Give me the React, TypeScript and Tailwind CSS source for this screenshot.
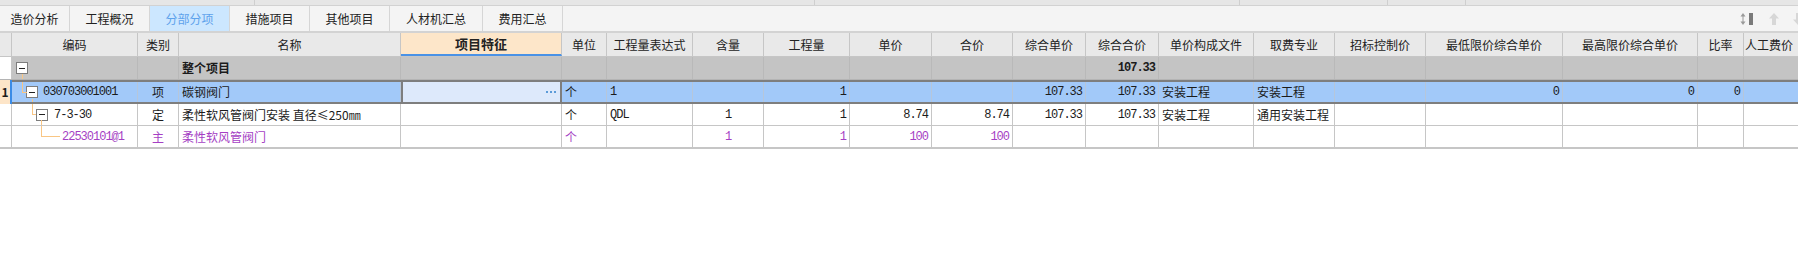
import React from 'react';
import clsx from 'clsx';

const cols = [
  { key: 'code', w: 'w-[126px]', title: '编码', align: 'l' },
  { key: 'type', w: 'w-[41px]', title: '类别', align: 'c' },
  { key: 'name', w: 'w-[222px]', title: '名称', align: 'l' },
  { key: 'feat', w: 'w-[161px]', title: '项目特征', align: 'l' },
  { key: 'unit', w: 'w-[45px]', title: '单位', align: 'l' },
  { key: 'expr', w: 'w-[86px]', title: '工程量表达式', align: 'l' },
  { key: 'content', w: 'w-[71px]', title: '含量', align: 'c' },
  { key: 'qty', w: 'w-[86px]', title: '工程量', align: 'r' },
  { key: 'price', w: 'w-[82px]', title: '单价', align: 'r' },
  { key: 'total', w: 'w-[81px]', title: '合价', align: 'r' },
  { key: 'cprice', w: 'w-[73px]', title: '综合单价', align: 'r' },
  { key: 'ctotal', w: 'w-[73px]', title: '综合合价', align: 'r' },
  { key: 'file', w: 'w-[95px]', title: '单价构成文件', align: 'l' },
  { key: 'major', w: 'w-[81px]', title: '取费专业', align: 'l' },
  { key: 'ctrl', w: 'w-[91px]', title: '招标控制价', align: 'r' },
  { key: 'min', w: 'w-[137px]', title: '最低限价综合单价', align: 'r' },
  { key: 'max', w: 'w-[135px]', title: '最高限价综合单价', align: 'r' },
  { key: 'rate', w: 'w-[46px]', title: '比率', align: 'r' },
  { key: 'labor', w: 'w-[100px]', title: '人工费价', align: 'r' },
];

const alignCls: Record<string, string> = {
  l: 'justify-start',
  c: 'justify-center',
  r: 'justify-end',
};

const tabs = ['造价分析', '工程概况', '分部分项', '措施项目', '其他项目', '人材机汇总', '费用汇总'];
const tabW = ['w-[70px]', 'w-[80px]', 'w-[80px]', 'w-[80px]', 'w-[80px]', 'w-[93px]', 'w-[80px]'];

const mono = "font-['Liberation_Mono','Noto_Sans_CJK_SC',monospace] tracking-[-1px]";

type RowData = Record<string, string>;

// tree box "−"
function Box() {
  return (
    <span className="shrink-0 w-[12px] h-[12px] border border-[#7d7d7d] bg-white flex items-center justify-center">
      <span className="w-[6px] h-[1px] bg-[#222]" />
    </span>
  );
}

function TreeCell({ level, text, className }: { level: number; text: string; className?: string }) {
  return (
    <div className={clsx('relative shrink-0 w-[126px] h-full border-r flex items-center', className)}>
      {level === 0 && (
        <>
          <span className="ml-[4px]"><Box /></span>
          <span className="absolute left-[10px] top-[17px] bottom-0 w-px bg-[#f9c684]" />
        </>
      )}
      {level === 1 && (
        <>
          <span className="absolute left-[10px] top-0 h-[11px] w-px bg-[#f9c684]" />
          <span className="absolute left-[10px] top-[10px] w-[5px] h-px bg-[#f9c684]" />
          <span className="absolute left-[20px] top-[17px] bottom-0 w-px bg-[#f9c684]" />
          <span className="ml-[14px]"><Box /></span>
          <span className={clsx('ml-[5px]', mono)}>{text}</span>
        </>
      )}
      {level === 2 && (
        <>
          <span className="absolute left-[20px] top-0 h-[11px] w-px bg-[#f9c684]" />
          <span className="absolute left-[20px] top-[10px] w-[4px] h-px bg-[#f9c684]" />
          <span className="absolute left-[29px] top-[16px] bottom-0 w-px bg-[#f9c684]" />
          <span className="ml-[24px]"><Box /></span>
          <span className={clsx('ml-[6px]', mono)}>{text}</span>
        </>
      )}
      {level === 3 && (
        <>
          <span className="absolute left-[29px] top-0 h-[11px] w-px bg-[#f9c684]" />
          <span className="absolute left-[29px] top-[10px] w-[19px] h-px bg-[#f9c684]" />
          <span className={clsx('ml-[50px]', mono)}>{text}</span>
        </>
      )}
    </div>
  );
}

function isLatin(s: string) {
  return /^[0-9A-Za-z.@\-]+$/.test(s);
}

function DataCells({ data, border, featCell }: { data: RowData; border: string; featCell?: React.ReactNode }) {
  return (
    <>
      {cols.slice(1).map((c) =>
        c.key === 'feat' && featCell ? (
          <React.Fragment key={c.key}>{featCell}</React.Fragment>
        ) : (
          <div
            key={c.key}
            className={clsx(
              'shrink-0 h-full flex items-center px-[3px] border-r overflow-hidden whitespace-nowrap',
              c.w,
              border,
              alignCls[c.align],
              data[c.key] && isLatin(data[c.key]) && mono
            )}
          >
            {data[c.key] || ''}
          </div>
        )
      )}
    </>
  );
}

export default function App() {
  const selRow: RowData = {
    type: '项',
    name: '碳钢阀门',
    unit: '个',
    expr: '1',
    qty: '1',
    cprice: '107.33',
    ctotal: '107.33',
    file: '安装工程',
    major: '安装工程',
    min: '0',
    max: '0',
    rate: '0',
  };
  const quotaRow: RowData = {
    type: '定',
    name: '柔性软风管阀门安装 直径≤250㎜',
    unit: '个',
    expr: 'QDL',
    content: '1',
    qty: '1',
    price: '8.74',
    total: '8.74',
    cprice: '107.33',
    ctotal: '107.33',
    file: '安装工程',
    major: '通用安装工程',
  };
  const mainRow: RowData = {
    type: '主',
    name: '柔性软风管阀门',
    unit: '个',
    content: '1',
    qty: '1',
    price: '100',
    total: '100',
  };

  return (
    <div className="w-[1798px] h-[280px] overflow-hidden bg-white text-[12px] leading-none text-[#1b1b1b] font-['Noto_Sans_CJK_SC','Liberation_Sans',sans-serif]">
      {/* top strip */}
      <div className="flex h-[6px] bg-[#e6e6e6] border-b border-[#d2d2d2]">
        <div className="w-[255px] border-r border-[#cfcfcf]" />
        <div className="w-[560px] border-r border-[#cfcfcf]" />
        <div className="w-[425px] border-r border-[#cfcfcf]" />
        <div className="w-[148px] border-r border-[#cfcfcf]" />
        <div className="w-[78px] border-r border-[#cfcfcf]" />
      </div>

      {/* tabs */}
      <div className="flex h-[27px] bg-[#f4f4f4] border-b-2 border-[#d3d3d3]">
        {tabs.map((t, i) => (
          <div
            key={t}
            className={clsx(
              'h-full flex items-center justify-center border-r border-[#d6d6d6] text-[12px]',
              tabW[i],
              i === 2 ? 'bg-[#cce7ff] text-[#5ea2ec]' : 'text-[#222]'
            )}
          >
            {t}
          </div>
        ))}
        <div className="flex-1" />
        <div className="flex items-center gap-[12px] -mr-[6px]">
          <svg width="16" height="14" viewBox="0 0 16 14">
            <path d="M3 1 L5.5 4.5 H0.5 Z" fill="#9a9a9a" />
            <path d="M3 13 L0.5 9.5 H5.5 Z" fill="#9a9a9a" />
            <rect x="2.5" y="4" width="1" height="6" fill="#9a9a9a" />
            <rect x="9" y="1" width="4" height="12" fill="#7a7a7a" />
          </svg>
          <svg width="12" height="14" viewBox="0 0 12 14">
            <path d="M6 1 L11 6.5 H8 V13 H4 V6.5 H1 Z" fill="#d7d7d7" />
          </svg>
          <svg width="12" height="14" viewBox="0 0 12 14">
            <path d="M6 13 L11 7.5 H8 V1 H4 V7.5 H1 Z" fill="#d7d7d7" />
          </svg>
        </div>
      </div>

      {/* header */}
      <div className="flex h-[24px] bg-[#e9e9e9] border-b border-[#c6c6c6] text-[#222]">
        <div className="shrink-0 w-[12px] h-full border-r border-[#c6c6c6]" />
        {cols.map((c) => (
          <div
            key={c.key}
            className={clsx(
              'shrink-0 h-full flex items-center border-r border-[#c6c6c6] whitespace-nowrap overflow-hidden',
              c.w,
              c.key === 'labor' ? 'justify-start pl-[1px]' : 'justify-center',
              c.key === 'feat' && 'bg-[#fde6c9] font-bold border-b-2 border-b-[#4a92e6] text-[13px]'
            )}
          >
            {c.title}
          </div>
        ))}
      </div>

      {/* 整个项目 */}
      <div className="flex h-[23px] border-b border-[#b4b4b4]">
        <div className="shrink-0 w-[12px] h-full bg-white border-r border-[#c6c6c6]" />
        <div className="flex h-full bg-[#c4c4c4]">
          <TreeCell level={0} text="" className="border-[#b9b9b9]" />
          {cols.slice(1).map((c) => (
            <div
              key={c.key}
              className={clsx(
                'shrink-0 h-full flex items-center px-[3px] border-r border-[#b9b9b9] font-bold',
                c.w,
                alignCls[c.align],
                c.key === 'ctotal' && mono
              )}
            >
              {c.key === 'name' ? '整个项目' : c.key === 'ctotal' ? '107.33' : ''}
            </div>
          ))}
        </div>
      </div>

      {/* selected 清单 row */}
      <div className="flex h-[24px]">
        <div className="shrink-0 w-[12px] h-full bg-[#fde5c8] border-r-2 border-[#3a8be6] flex items-center justify-center font-bold">
          1
        </div>
        <div className="flex h-full bg-[#a2c9f9] border-y-2 border-[#7e7e7e]">
          <TreeCell level={1} text="030703001001" className="border-[#b6c6da]" />
          <DataCells
            data={selRow}
            border="border-[#b6c6da]"
            featCell={
              <div className="shrink-0 w-[161px] h-full bg-[#dde9fb] border-x-2 border-[#7e7e7e] flex items-center justify-end pr-[4px]">
                <span className="flex gap-[2px]">
                  <span className="w-[2px] h-[2px] bg-[#5b9bd8]" />
                  <span className="w-[2px] h-[2px] bg-[#5b9bd8]" />
                  <span className="w-[2px] h-[2px] bg-[#5b9bd8]" />
                </span>
              </div>
            }
          />
        </div>
      </div>

      {/* 定额 row */}
      <div className="flex h-[22px] border-b border-[#c6c6c6]">
        <div className="shrink-0 w-[12px] h-full border-r border-[#c6c6c6]" />
        <TreeCell level={2} text="7-3-30" className="border-[#c6c6c6]" />
        <DataCells data={quotaRow} border="border-[#c6c6c6]" />
      </div>

      {/* 主材 row */}
      <div className="flex h-[23px] border-b-2 border-[#c6c6c6] text-[#a53fc4]">
        <div className="shrink-0 w-[12px] h-full border-r border-[#c6c6c6]" />
        <TreeCell level={3} text="22530101@1" className="border-[#c6c6c6]" />
        <DataCells data={mainRow} border="border-[#c6c6c6]" />
      </div>
    </div>
  );
}
